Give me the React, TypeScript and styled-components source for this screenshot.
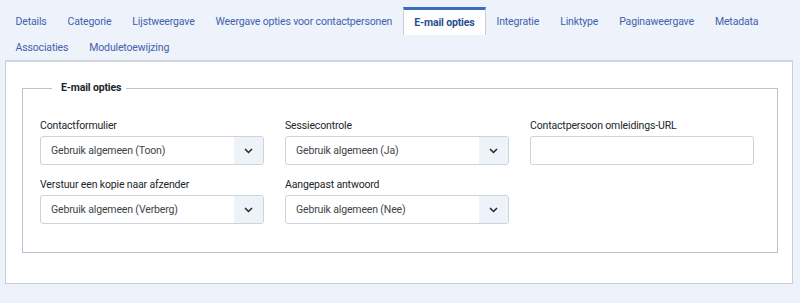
import React from 'react'
import styled, { createGlobalStyle } from 'styled-components'

const GlobalStyle = createGlobalStyle`
  body {
    margin: 0;
    background: #eef2fa;
    font-family: Roboto, "Liberation Sans", sans-serif;
    color: #22262a;
    letter-spacing: -0.15px;
  }
`

const Page = styled.div`
  width: 800px;
  height: 303px;
  overflow: hidden;
`

const TabList = styled.ul`
  list-style: none;
  margin: 0;
  padding: 8px 0 0 5px;
  display: flex;
  flex-wrap: wrap;
  align-items: flex-start;
`

const Tab = styled.li<{ $active?: boolean }>`
  box-sizing: border-box;
  height: ${(p) => (p.$active ? '28px' : '26px')};
  margin: ${(p) => (p.$active ? '-1px 0' : '0')};
  padding: 0 9.5px;
  border: 1px solid transparent;
  display: flex;
  align-items: center;
  font-size: 10.5px;
  color: ${(p) => (p.$active ? '#2b4e93' : '#3f62ad')};
  font-weight: ${(p) => (p.$active ? 700 : 400)};
  white-space: nowrap;
  ${(p) =>
    p.$active &&
    `
    background: #fff;
    border-color: #c6cfdb;
    border-top: 3px solid #3a6cc2;
    border-bottom: none;
    padding: 0 10.5px;
  `}
`

const Panel = styled.div`
  margin: 0 7px 0 5px;
  background: #fff;
  border: 1px solid #c6cfdb;
  border-top: 2px solid #cfd6e0;
  padding: 18px 14px 30px 16px;
`

const Fieldset = styled.fieldset`
  margin: 0;
  border: 1px solid #b9c3d1;
  padding: 22px 23px 28px 17px;
`

const Legend = styled.legend`
  margin-left: 12px;
  padding: 0 5px 0 9px;
  font-size: 10.5px;
  font-weight: 700;
  line-height: 16px;
  color: #22262a;
`

const Grid = styled.div`
  display: grid;
  grid-template-columns: repeat(3, 224px);
  column-gap: 21px;
  row-gap: 12px;
`

const Field = styled.div`
  display: flex;
  flex-direction: column;
`

const Label = styled.label`
  font-size: 10.5px;
  line-height: 16px;
  margin-bottom: 2px;
  color: #22262a;
`

const SelectBox = styled.div`
  box-sizing: border-box;
  height: 29px;
  border: 1px solid #cdd3dc;
  border-radius: 3px;
  display: flex;
  align-items: stretch;
  overflow: hidden;
  background: #fff;
`

const SelectValue = styled.span`
  flex: 1;
  display: flex;
  align-items: center;
  padding-left: 10px;
  font-size: 10.5px;
  color: #404448;
`

const Chevron = styled.span`
  width: 29px;
  background: #eef2f9;
  display: flex;
  align-items: center;
  justify-content: center;
`

const TextInput = styled.div`
  box-sizing: border-box;
  height: 29px;
  border: 1px solid #cdd3dc;
  border-radius: 3px;
  background: #fff;
`

const tabs = [
  'Details',
  'Categorie',
  'Lijstweergave',
  'Weergave opties voor contactpersonen',
  'E-mail opties',
  'Integratie',
  'Linktype',
  'Paginaweergave',
  'Metadata',
  'Associaties',
  'Moduletoewijzing',
]

const Select = ({ value }: { value: string }) => (
  <SelectBox>
    <SelectValue>{value}</SelectValue>
    <Chevron>
      <svg width="9" height="6" viewBox="0 0 9 6">
        <path d="M1 1 L4.5 4.5 L8 1" fill="none" stroke="#22262a" strokeWidth="1.5" />
      </svg>
    </Chevron>
  </SelectBox>
)

export default function App() {
  return (
    <Page>
      <GlobalStyle />
      <TabList>
        {tabs.map((t) => (
          <Tab key={t} $active={t === 'E-mail opties'}>
            {t}
          </Tab>
        ))}
      </TabList>
      <Panel>
        <Fieldset>
          <Legend>E-mail opties</Legend>
          <Grid>
            <Field>
              <Label>Contactformulier</Label>
              <Select value="Gebruik algemeen (Toon)" />
            </Field>
            <Field>
              <Label>Sessiecontrole</Label>
              <Select value="Gebruik algemeen (Ja)" />
            </Field>
            <Field>
              <Label>Contactpersoon omleidings-URL</Label>
              <TextInput />
            </Field>
            <Field>
              <Label>Verstuur een kopie naar afzender</Label>
              <Select value="Gebruik algemeen (Verberg)" />
            </Field>
            <Field>
              <Label>Aangepast antwoord</Label>
              <Select value="Gebruik algemeen (Nee)" />
            </Field>
          </Grid>
        </Fieldset>
      </Panel>
    </Page>
  )
}
